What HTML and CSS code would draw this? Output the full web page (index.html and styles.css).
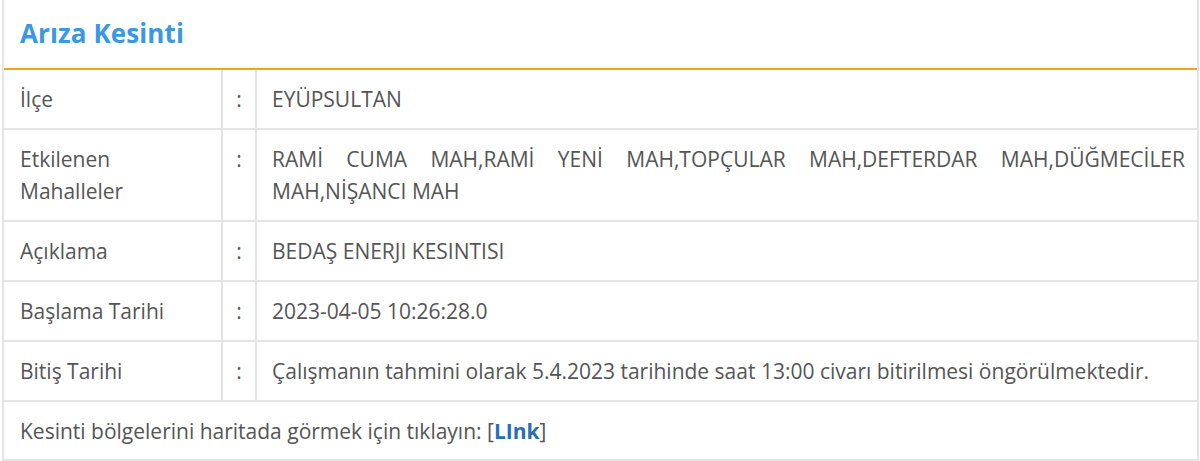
FILE: index.html
```html
<!DOCTYPE html>
<html lang="tr">
<head>
<meta charset="utf-8">
<title>Arıza Kesinti</title>
<link rel="stylesheet" href="styles.css">
</head>
<body>
<div class="panel">
  <div class="panel-head"><h2 class="title">Arıza Kesinti</h2></div>
  <div class="grid">
    <div class="cell label">İlçe</div>
    <div class="cell colon">:</div>
    <div class="cell value">EYÜPSULTAN</div>

    <div class="cell label">Etkilenen Mahalleler</div>
    <div class="cell colon">:</div>
    <div class="cell value justify">RAMİ CUMA MAH,RAMİ YENİ MAH,TOPÇULAR MAH,DEFTERDAR MAH,DÜĞMECİLER MAH,NİŞANCI MAH</div>

    <div class="cell label">Açıklama</div>
    <div class="cell colon">:</div>
    <div class="cell value">BEDAŞ ENERJI KESINTISI</div>

    <div class="cell label">Başlama Tarihi</div>
    <div class="cell colon">:</div>
    <div class="cell value">2023-04-05 10:26:28.0</div>

    <div class="cell label">Bitiş Tarihi</div>
    <div class="cell colon">:</div>
    <div class="cell value">Çalışmanın tahmini olarak 5.4.2023 tarihinde saat 13:00 civarı bitirilmesi öngörülmektedir.</div>

    <div class="cell full">Kesinti bölgelerini haritada görmek için tıklayın: [<a class="link" href="#">LInk</a>]</div>
  </div>
</div>
</body>
</html>
```
FILE: styles.css
```css
* { box-sizing: border-box; }
html, body { margin: 0; padding: 0; background: #fff; }
body {
  font-family: "Open Sans", "Noto Sans", sans-serif;
  color: #555;
  font-size: 21px;
}
.panel {
  margin: 0 1px 0 2px;
  border: 2px solid #e4e4e4;
  border-top: none;
}
.panel-head {
  height: 70px;
  border-bottom: 2px solid #f5a11a;
  padding: 0 16px 3px;
  display: flex;
  align-items: center;
}
.title {
  margin: 0;
  font-size: 26px;
  font-weight: 700;
  color: #3a98e2;
  letter-spacing: 0.1px;
}
.grid {
  display: grid;
  grid-template-columns: 219px 34px 1fr;
}
.cell {
  border-bottom: 2px solid #e4e4e4;
  line-height: 32px;
  padding: 13px 12px 13px 16px;
}
.label { border-right: 2px solid #e4e4e4; }
.colon {
  border-right: 2px solid #e4e4e4;
  text-align: center;
  padding-left: 0;
  padding-right: 0;
}
.value { padding-left: 15px; padding-right: 12px; }
.justify { text-align: justify; }
.full {
  grid-column: 1 / -1;
  border-bottom: none;
  padding-bottom: 12px;
}
.link {
  color: #2a6db3;
  font-weight: 700;
  text-decoration: none;
}
```
